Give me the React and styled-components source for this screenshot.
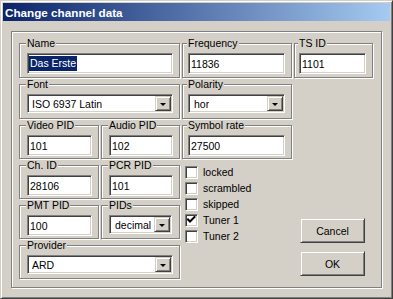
import React from 'react';
import styled, { createGlobalStyle } from 'styled-components';

const Global = createGlobalStyle`
  html, body { margin: 0; padding: 0; background: #D4D0C8; }
  body { font-family: "Liberation Sans", Arial, sans-serif; font-size: 10.5px; color: #000; }
  * { box-sizing: border-box; }
`;

const Window = styled.div`
  width: 393px;
  height: 299px;
  background: #D4D0C8;
  border: 1px solid;
  border-color: #D4D0C8 #404040 #404040 #D4D0C8;
  box-shadow: inset 1px 1px 0 #fff, inset -1px -1px 0 #808080;
  padding: 2px;
  display: flex;
  flex-direction: column;
`;

const TitleBar = styled.div`
  flex: none;
  height: 18px;
  background: linear-gradient(to right, #0A246A, #A6CAF0);
  color: #fff;
  font-weight: bold;
  font-size: 11.7px;
  display: flex;
  align-items: center;
  padding-left: 2px;
  padding-top: 1px;
`;

const Content = styled.div`
  flex: 1;
  display: flex;
  padding: 10px 8px 8px 8px;
`;

const Panel = styled.div`
  flex: 1;
  border: 1px solid #808080;
  box-shadow: inset 1px 1px 0 #fff, 1px 1px 0 #fff;
  padding: 6px 0 0 7px;
`;

const Grid = styled.div`
  display: grid;
  grid-template-columns: 80px 79px 110px 79px;
  grid-template-rows: 41px 41px 40px 40px 40px 40px;
  column-gap: 2px;
`;

const Group = styled.div`
  position: relative;
  padding-top: 5px;
  padding-bottom: 1px;
  grid-column: ${p => p.$col || 'auto'};
  grid-row: ${p => p.$row || 'auto'};
`;

const Legend = styled.span`
  position: absolute;
  top: 0;
  left: ${p => p.$inset}px;
  padding: 0 1px;
  background: #D4D0C8;
  line-height: 11px;
  white-space: nowrap;
`;

const Frame = styled.div`
  height: 100%;
  border: 1px solid #808080;
  box-shadow: inset 1px 1px 0 #fff, 1px 1px 0 #fff;
  padding: ${p => p.$top ?? 9}px ${p => p.$right ?? 6}px 0 ${p => p.$inset}px;
  display: flex;
  align-items: flex-start;
`;

const sunken = `
  background: #fff;
  border: 1px solid;
  border-color: #808080 #fff #fff #808080;
  box-shadow: inset 1px 1px 0 #404040, inset -1px -1px 0 #D4D0C8;
`;

const raised = `
  background: #D4D0C8;
  border: 1px solid;
  border-color: #D4D0C8 #404040 #404040 #D4D0C8;
  box-shadow: inset 1px 1px 0 #fff, inset -1px -1px 0 #808080;
`;

const Edit = styled.div`
  ${sunken}
  width: 100%;
  height: 21px;
  padding: 0 2px;
  display: flex;
  align-items: center;
  white-space: nowrap;
  overflow: hidden;
`;

const Selected = styled.span`
  background: #0A246A;
  color: #fff;
  margin-left: -1px;
  padding: 1px 1px 2px 1px;
`;

const Combo = styled.div`
  ${sunken}
  width: ${p => p.$w ? `${p.$w}px` : '100%'};
  height: 19px;
  padding: 1px;
  display: flex;
  align-items: center;
  justify-content: space-between;
  white-space: nowrap;
`;

const ComboText = styled.span`
  padding-left: ${p => p.$pl ?? 3}px;
  overflow: hidden;
`;

const DropButton = styled.div`
  ${raised}
  flex: none;
  width: 16px;
  height: 15px;
  display: flex;
  align-items: center;
  justify-content: center;
  &::after {
    content: '';
    width: 0;
    height: 0;
    border-left: 3px solid transparent;
    border-right: 3px solid transparent;
    border-top: 3px solid #000;
    margin-top: 1px;
  }
`;

const CheckList = styled.div`
  grid-column: 3;
  grid-row: 4 / span 3;
  padding: 4px 0 0 3px;
  display: flex;
  flex-direction: column;
`;

const CheckRow = styled.div`
  height: 16px;
  display: flex;
  align-items: center;
`;

const Box = styled.span`
  ${sunken}
  flex: none;
  width: 13px;
  height: 13px;
  display: flex;
  align-items: center;
  justify-content: center;
`;

const CheckLabel = styled.span`
  margin-left: 5px;
  white-space: nowrap;
`;

const ButtonColumn = styled.div`
  grid-column: 4;
  grid-row: 4 / span 3;
  padding: 58px 0 0 6px;
  display: flex;
  flex-direction: column;
  gap: 8px;
`;

const Button = styled.div`
  ${raised}
  width: 65px;
  height: 25px;
  display: flex;
  align-items: center;
  justify-content: center;
`;

const CheckMark = () => (
  <svg width="9" height="9" viewBox="0 0 9 9">
    <path d="M1 3.5 L3 5.5 L7.5 1" fill="none" stroke="#000" strokeWidth="2" strokeLinecap="square" />
  </svg>
);

function Field({ label, col, row, inset = 7, right, children }) {
  return (
    <Group $col={col} $row={row}>
      <Frame $inset={inset} $right={right}>{children}</Frame>
      <Legend $inset={inset}>{label}</Legend>
    </Group>
  );
}

function Check({ label, checked }) {
  return (
    <CheckRow>
      <Box>{checked && <CheckMark />}</Box>
      <CheckLabel>{label}</CheckLabel>
    </CheckRow>
  );
}

export default function App() {
  return (
    <>
      <Global />
      <Window>
        <TitleBar>Change channel data</TitleBar>
        <Content>
          <Panel>
            <Grid>
              <Field label="Name" col="1 / span 2" row="1">
                <Edit><Selected>Das Erste</Selected></Edit>
              </Field>
              <Field label="Frequency" col="3" row="1" inset={5}>
                <Edit>11836</Edit>
              </Field>
              <Field label="TS ID" col="4" row="1" inset={4}>
                <Edit>1101</Edit>
              </Field>

              <Field label="Font" col="1 / span 2" row="2">
                <Combo><ComboText>ISO 6937 Latin</ComboText><DropButton /></Combo>
              </Field>
              <Field label="Polarity" col="3" row="2" inset={5}>
                <Combo><ComboText $pl={4}>hor</ComboText><DropButton /></Combo>
              </Field>

              <Field label="Video PID" col="1" row="3">
                <Edit>101</Edit>
              </Field>
              <Field label="Audio PID" col="2" row="3">
                <Edit>102</Edit>
              </Field>
              <Field label="Symbol rate" col="3" row="3" inset={5}>
                <Edit>27500</Edit>
              </Field>

              <Field label="Ch. ID" col="1" row="4">
                <Edit>28106</Edit>
              </Field>
              <Field label="PCR PID" col="2" row="4">
                <Edit>101</Edit>
              </Field>

              <Field label="PMT PID" col="1" row="5">
                <Edit>100</Edit>
              </Field>
              <Field label="PIDs" col="2" row="5">
                <Combo $w={63}><ComboText $pl={4}>decimal</ComboText><DropButton /></Combo>
              </Field>

              <Field label="Provider" col="1 / span 2" row="6">
                <Combo><ComboText>ARD</ComboText><DropButton /></Combo>
              </Field>

              <CheckList>
                <Check label="locked" />
                <Check label="scrambled" />
                <Check label="skipped" />
                <Check label="Tuner 1" checked />
                <Check label="Tuner 2" />
              </CheckList>

              <ButtonColumn>
                <Button>Cancel</Button>
                <Button>OK</Button>
              </ButtonColumn>
            </Grid>
          </Panel>
        </Content>
      </Window>
    </>
  );
}
